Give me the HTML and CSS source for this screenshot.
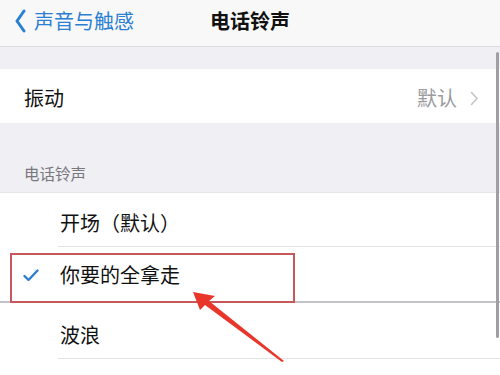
FILE: index.html
```html
<!DOCTYPE html>
<html lang="zh">
<head>
<meta charset="utf-8">
<link rel="stylesheet" href="styles.css">
</head>
<body>
<div class="screen">
  <header class="nav">
    <div class="back">
      <svg class="back-icon" width="12" height="24" viewBox="0 0 12 24"><path d="M10 2 L3 12 L10 22" fill="none" stroke="#2b7fd3" stroke-width="3" stroke-linecap="round" stroke-linejoin="round"/></svg>
      <span>声音与触感</span>
    </div>
    <h1 class="title">电话铃声</h1>
    <div></div>
  </header>
  <div class="spacer"></div>
  <div class="group">
    <div class="row vib">
      <span class="label">振动</span>
      <span class="value">默认<svg class="chev" width="9" height="15" viewBox="0 0 9 15"><path d="M1.5 1.5 L7 7.5 L1.5 13.5" fill="none" stroke="#c4c4c8" stroke-width="1.6" stroke-linecap="round" stroke-linejoin="round"/></svg></span>
    </div>
  </div>
  <div class="section-header">电话铃声</div>
  <div class="group list">
    <div class="row item r1"><span class="check"></span><span class="label">开场（默认）</span></div>
    <div class="row item r2 selected"><span class="check"><svg width="16" height="13" viewBox="0 0 16 13"><path d="M1.5 7 L5.5 11 L14.5 1.5" fill="none" stroke="#2b7fd3" stroke-width="2.4" stroke-linecap="round" stroke-linejoin="round"/></svg></span><span class="label">你要的全拿走</span></div>
    <div class="row item r3"><span class="check"></span><span class="label">波浪</span></div>
    <div class="row item r4"><span class="check"></span><span class="label">宇宙</span></div>
  </div>

  <div class="highlight"></div>
  <svg class="arrow" width="500" height="375" viewBox="0 0 500 375">
    <polygon points="193,292 215,296 209,301 284,361 282,362 205,305 200,310" fill="#e8362b"/>
  </svg>
  <div class="scrollbar"></div>
</div>
</body>
</html>
```

FILE: styles.css
```css
* { box-sizing: border-box; margin: 0; padding: 0; }
html, body { width: 500px; height: 375px; overflow: hidden; }
body {
  background: #efeff4;
  font-family: "Noto Sans CJK SC", "Noto Sans", sans-serif;
  color: #111;
}
.screen { position: relative; width: 500px; height: 375px; overflow: hidden; }

.nav {
  height: 47px;
  background: #f8f8f9;
  border-bottom: 1px solid #dcdce0;
  display: grid;
  grid-template-columns: 1fr auto 1fr;
  align-items: center;
  padding-bottom: 5px;
}
.back {
  display: flex;
  align-items: center;
  gap: 8px;
  padding-left: 14px;
  color: #2b7fd3;
  font-size: 20px;
  line-height: 24px;
}
.back-icon { flex: none; }
.title {
  font-size: 20px;
  font-weight: 600;
  line-height: 24px;
  color: #111;
}

.spacer { height: 22px; }

.group { background: #fff; }
.row {
  display: flex;
  align-items: center;
  font-size: 20px;
  line-height: 24px;
}
.vib {
  height: 54px;
  padding: 4px 21px 0 24px;
  justify-content: space-between;
}
.value {
  display: flex;
  align-items: center;
  gap: 13px;
  color: #9a9a9f;
}

.section-header {
  height: 69px;
  display: flex;
  align-items: flex-end;
  padding: 0 0 9px 24px;
  font-size: 15.5px;
  line-height: 20px;
  color: #77777c;
}

.list { border-top: 1px solid #e6e6ea; }
.item {
  padding-top: 6px;
  position: relative;
}
.item::after {
  content: "";
  position: absolute;
  left: 58px; right: 0; bottom: 0;
  height: 1px;
  background: #e3e3e6;
}
.r1 { height: 54px; }
.r2 { height: 56px; padding-top: 0; }
.r2::after { left: 0; background: #c4c4c8; height: 2px; }
.r3 { height: 56px; padding-top: 8px; }
.r4 { height: 56px; padding-top: 14px; }
.check {
  width: 60px;
  padding-left: 23px;
  display: flex;
  align-items: center;
  flex: none;
}

.highlight {
  position: absolute;
  left: 10px; top: 253px;
  width: 285px; height: 50px;
  border: 2px solid #c6585c;
}
.arrow { position: absolute; left: 0; top: 0; }
.scrollbar {
  position: absolute;
  left: 496px; top: 52px;
  width: 3px; height: 286px;
  background: #a0a0a4;
  border-radius: 2px;
}
```
